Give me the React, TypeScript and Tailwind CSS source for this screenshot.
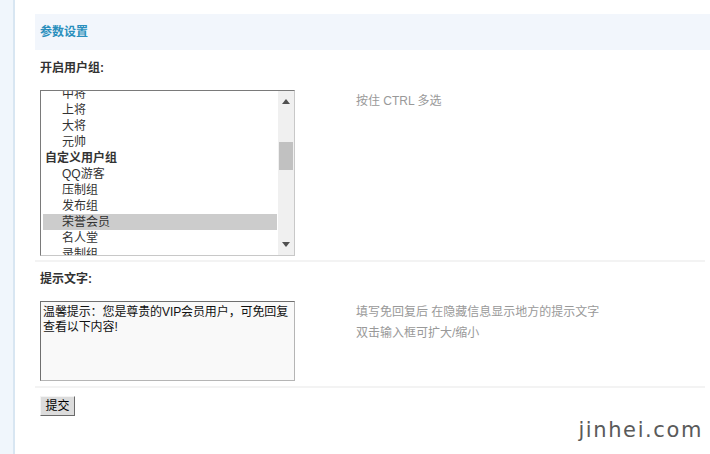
import React from "react";

const groups = ["中将", "上将", "大将", "元帅"];
const custom = ["QQ游客", "压制组", "发布组", "荣誉会员", "名人堂", "录制组"];

function Scrollbar() {
  return (
    <div className="flex h-full w-[16px] flex-col items-center bg-[#f0f0f0]">
      <div className="flex h-[17px] w-full items-center justify-center pt-[4px]">
        <svg width="8" height="5" viewBox="0 0 8 5">
          <path d="M0 5 L4 0 L8 5 Z" fill="#505050" />
        </svg>
      </div>
      <div className="mt-[34px] h-[28px] w-[14px] bg-[#c1c1c1]" />
      <div className="flex-1" />
      <div className="flex h-[17px] w-full items-center justify-center pb-[4px]">
        <svg width="8" height="5" viewBox="0 0 8 5">
          <path d="M0 0 L8 0 L4 5 Z" fill="#505050" />
        </svg>
      </div>
    </div>
  );
}

function GroupSelect() {
  return (
    <div className="flex h-[166px] w-[255px] border border-t-[#7a7a7a] border-l-[#7a7a7a] border-r-[#c8c8c8] border-b-[#c8c8c8] bg-white">
      <div className="relative flex-1 overflow-hidden">
        <div className="-mt-[5px] text-[12px] leading-[16px] text-[#333]">
          {groups.map((g) => (
            <div key={g} className="pl-[21px]">
              {g}
            </div>
          ))}
          <div className="pl-[4px] font-bold">自定义用户组</div>
          {custom.map((c) => (
            <div
              key={c}
              className={`ml-[2px] mr-[1px] pl-[19px] ${c === "荣誉会员" ? "bg-[#cccccc]" : ""}`}
            >
              {c}
            </div>
          ))}
        </div>
      </div>
      <Scrollbar />
    </div>
  );
}

export default function App() {
  return (
    <div
      className="relative flex h-[454px] w-[710px] overflow-hidden bg-white text-[12px]"
      style={{ fontFamily: '"Liberation Sans", "Noto Sans CJK SC", sans-serif' }}
    >
      <div className="w-[15px] shrink-0 border-r-2 border-[#d8e6f2] bg-[#f0f6fc]" />

      <div className="flex-1 pl-[20px] pt-[14px]">
        <div className="flex h-[36px] items-center bg-[#f2f6fc] px-[5px] font-bold text-[#2a8fbd]">
          参数设置
        </div>

        <div className="pl-[5px] pt-[10px] font-bold leading-[16px] text-[#333]">开启用户组:</div>
        <div className="flex pl-[5px] pt-[14px]">
          <GroupSelect />
          <div className="pl-[61px] pt-[3px] leading-[16px] text-[#999]">按住 CTRL 多选</div>
        </div>

        <div className="mr-[5px] mt-[4px] h-[2px] bg-[#f3f3f3]" />

        <div className="pl-[5px] pt-[9px] font-bold leading-[16px] text-[#333]">提示文字:</div>
        <div className="flex pl-[5px] pt-[14px]">
          <div className="h-[80px] w-[255px] overflow-hidden whitespace-nowrap border border-t-[#6f6f6f] border-l-[#6f6f6f] border-r-[#b5b5b5] border-b-[#b5b5b5] bg-[#f9f9f9] px-[2px] pt-[3px] leading-[15px] tracking-[-0.1px] text-[#111]">
            <div>温馨提示：您是尊贵的VIP会员用户，可免回复</div>
            <div>查看以下内容!</div>
          </div>
          <div className="pl-[61px] pt-[1px] leading-[21px] text-[#999]">
            <div>填写免回复后 在隐藏信息显示地方的提示文字</div>
            <div>双击输入框可扩大/缩小</div>
          </div>
        </div>

        <div className="mr-[5px] mt-[5px] h-[2px] bg-[#f3f3f3]" />

        <div className="pl-[5px] pt-[8px]">
          <button className="flex h-[20px] w-[35px] items-center justify-center border border-t-[#f4f4f4] border-l-[#f4f4f4] border-r-[#6a6a6a] border-b-[#6a6a6a] bg-[#dcdcdc] text-[12px] text-black">
            提交
          </button>
        </div>
      </div>

      <div
        className="absolute bottom-[13px] right-[7px] text-[21px] leading-none tracking-[1.6px] text-[#5a5a5a]"
        style={{ fontFamily: '"DejaVu Sans", sans-serif' }}
      >
        jinhei.com
      </div>
    </div>
  );
}
